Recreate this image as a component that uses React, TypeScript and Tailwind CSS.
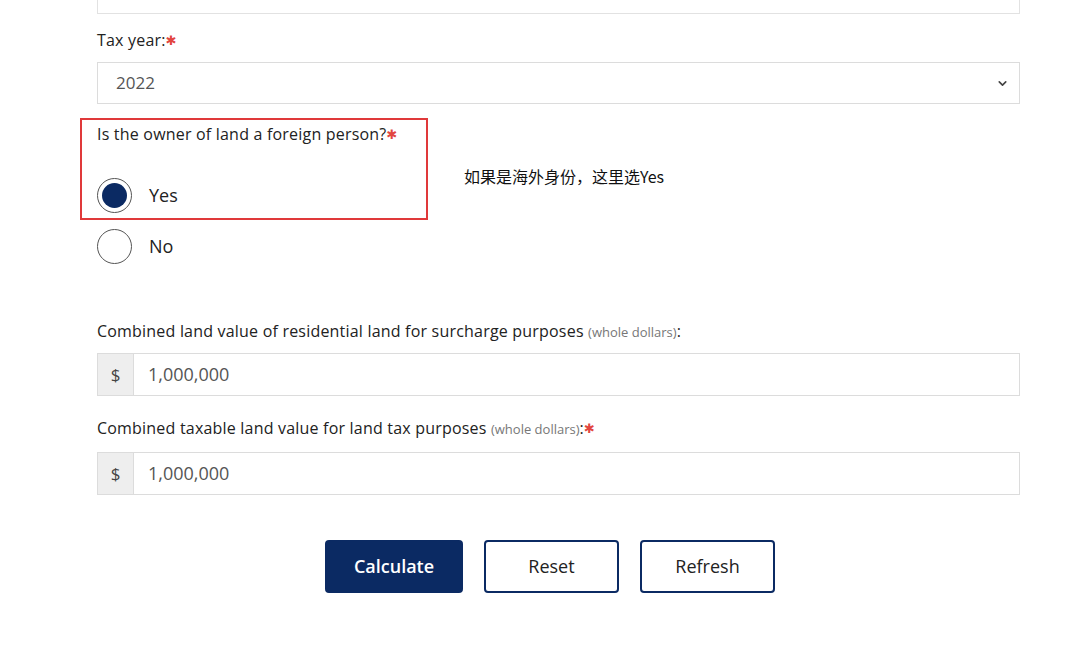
import React from "react";
import { ChevronDown } from "lucide-react";

const Star = () => (
  <span className="text-[#e2463f] font-bold text-[13px] align-[1px]" style={{ fontFamily: '"DejaVu Sans", sans-serif' }}>
    ✱
  </span>
);

const Radio = ({ checked, label }: { checked: boolean; label: string }) => (
  <div className="flex items-center h-[34px]">
    <div className="w-[35px] h-[35px] rounded-full border border-[#555] bg-white flex items-center justify-center">
      {checked && <div className="w-[25px] h-[25px] rounded-full bg-[#0b2a63]" />}
    </div>
    <span className="ml-[17px] text-[18px] font-medium text-[#222]">{label}</span>
  </div>
);

const MoneyInput = () => (
  <div className="flex h-[43px] border border-[#dcdcdc]">
    <div className="w-[36px] bg-[#eeeeee] flex items-center justify-center text-[17px] text-[#444] border-r border-[#dcdcdc]">$</div>
    <div className="flex items-center pl-[14px] text-[18px] text-[#555]">1,000,000</div>
  </div>
);

export default function App() {
  return (
    <div className="w-[1080px] h-[647px] bg-white overflow-hidden" style={{ fontFamily: '"Open Sans", sans-serif' }}>
      <div className="ml-[97px] w-[923px] flex flex-col">
        <div className="h-[14px] border border-t-0 border-[#e2e2e2]" />
        <div className="mt-[16px] h-[20px] leading-[20px] text-[16px] tracking-[0.2px] text-[#222]">
          Tax year:<Star />
        </div>
        <div className="mt-[12px] h-[42px] border border-[#dcdcdc] flex items-center justify-between pl-[18px] pr-[10px]">
          <span className="text-[17px] text-[#555]">2022</span>
          <ChevronDown size={13} strokeWidth={3} className="text-[#444]" />
        </div>

        <div className="relative">
          <div className="absolute left-[-17px] top-[14px] w-[348px] h-[102px] border-2 border-[#e0393a] pointer-events-none" />
          <div
            className="absolute left-[367px] top-[60px] text-[16px] font-normal text-[#111] whitespace-nowrap"
            style={{ fontFamily: '"Noto Sans CJK SC", "Open Sans", sans-serif' }}
          >
            如果是海外身份，这里选Yes
          </div>
          <div className="mt-[20px] h-[20px] leading-[20px] text-[16px] tracking-[0.2px] text-[#222]">
            Is the owner of land a foreign person?<Star />
          </div>
          <div className="mt-[34px]">
            <Radio checked label="Yes" />
          </div>
          <div className="mt-[17px]">
            <Radio checked={false} label="No" />
          </div>
        </div>

        <div className="mt-[58px] h-[20px] leading-[20px] text-[16px] tracking-[0.2px] text-[#222] whitespace-nowrap">
          Combined land value of residential land for surcharge purposes{" "}
          <span className="text-[13px] tracking-normal text-[#777]">(whole dollars)</span>:
        </div>
        <div className="mt-[12px]">
          <MoneyInput />
        </div>
        <div className="mt-[22px] h-[20px] leading-[20px] text-[16px] tracking-[0.2px] text-[#222] whitespace-nowrap">
          Combined taxable land value for land tax purposes{" "}
          <span className="text-[13px] tracking-normal text-[#777]">(whole dollars)</span>:<Star />
        </div>
        <div className="mt-[14px]">
          <MoneyInput />
        </div>

        <div className="mt-[45px] flex gap-[21px] pl-[228px]">
          <button className="w-[138px] h-[53px] rounded-[4px] bg-[#0b2a63] border-2 border-[#0b2a63] text-white text-[18px] font-semibold">
            Calculate
          </button>
          <button className="w-[135px] h-[53px] rounded-[4px] bg-white border-2 border-[#0b2a63] text-[#222] text-[18px] font-medium">
            Reset
          </button>
          <button className="w-[135px] h-[53px] rounded-[4px] bg-white border-2 border-[#0b2a63] text-[#222] text-[18px] font-medium">
            Refresh
          </button>
        </div>
      </div>
    </div>
  );
}
